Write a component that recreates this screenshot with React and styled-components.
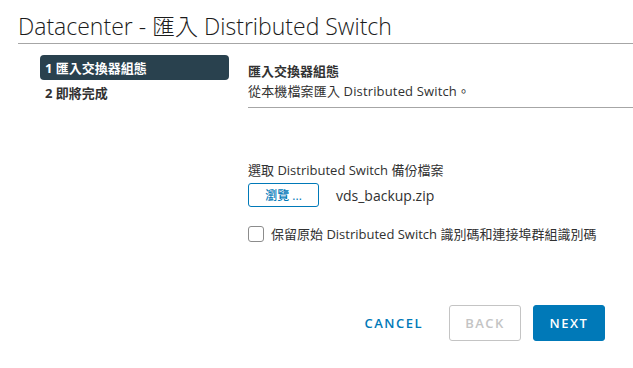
import React from "react";
import styled, { createGlobalStyle } from "styled-components";

const Global = createGlobalStyle`
  html, body { margin: 0; padding: 0; background: #fff; }
  body { font-family: "Open Sans", "Noto Sans CJK TC", sans-serif; color: #313131; }
  * { box-sizing: border-box; }
`;

const Page = styled.div`
  width: 633px;
  height: 368px;
  display: flex;
  flex-direction: column;
  padding-left: 18px;
`;

const Title = styled.h1`
  margin: 0;
  height: 44px;
  padding-top: 11px;
  font-size: 23px;
  font-weight: 300;
  line-height: 30px;
  color: #1b1b1b;
  border-bottom: 1px solid #a6a6a6;
  font-family: "Open Sans", "Noto Sans CJK TC", sans-serif;
`;

const Body = styled.div`
  display: flex;
  padding-top: 11px;
  flex: 1;
`;

const Nav = styled.nav`
  width: 189px;
  margin-left: 22px;
  display: flex;
  flex-direction: column;
`;

const Step = styled.div`
  height: 25px;
  padding-left: 5px;
  display: flex;
  align-items: center;
  font-size: 13px;
  font-weight: 700;
  border-radius: 4px;
  background: ${(p) => (p.$active ? "#29414e" : "transparent")};
  color: ${(p) => (p.$active ? "#fff" : "#313131")};
`;

const Content = styled.div`
  flex: 1;
  margin-left: 19px;
  display: flex;
  flex-direction: column;
`;

const Header = styled.div`
  padding-top: 6px;
  height: 53px;
  border-bottom: 1px solid #a6a6a6;
`;

const HeadTitle = styled.div`
  font-size: 13px;
  font-weight: 700;
  line-height: 20px;
  color: #313131;
`;

const HeadDesc = styled.div`
  font-size: 13px;
  line-height: 20px;
  letter-spacing: 0.15px;
  color: #313131;
`;

const Form = styled.div`
  padding-top: 53px;
  display: flex;
  flex-direction: column;
`;

const Label = styled.div`
  font-size: 13px;
  line-height: 18px;
  color: #313131;
`;

const FileRow = styled.div`
  display: flex;
  align-items: center;
  margin-top: 4px;
  gap: 17px;
`;

const BrowseButton = styled.button`
  width: 71px;
  height: 24px;
  border: 1px solid #0079b8;
  border-radius: 3px;
  background: #fff;
  color: #0079b8;
  font-size: 12px;
  font-weight: 500;
  font-family: inherit;
  padding: 0;
`;

const FileName = styled.span`
  font-size: 14px;
  color: #313131;
`;

const CheckRow = styled.label`
  display: flex;
  align-items: center;
  gap: 7px;
  margin-top: 17px;
  font-size: 13px;
  color: #313131;
`;

const Box = styled.span`
  width: 16px;
  height: 16px;
  border: 1px solid #8c8c8c;
  border-radius: 3px;
  background: #fff;
`;

const Footer = styled.div`
  display: flex;
  justify-content: flex-end;
  align-items: center;
  gap: 12px;
  padding-right: 28px;
  padding-bottom: 27px;
`;

const FooterButton = styled.button`
  height: 36px;
  min-width: 72px;
  padding: 0 ${(p) => (p.$flat ? "13px" : "12px")};
  font-family: inherit;
  font-size: 13px;
  font-weight: 600;
  letter-spacing: 1.5px;
  border-radius: 3px;
  border: 1px solid
    ${(p) => (p.$primary ? "#0079b8" : p.$disabled ? "#c4c4c4" : "transparent")};
  background: ${(p) => (p.$primary ? "#0079b8" : "transparent")};
  color: ${(p) => (p.$primary ? "#fff" : p.$disabled ? "#c4c4c4" : "#0079b8")};
`;

export default function App() {
  return (
    <>
      <Global />
      <Page>
        <Title>Datacenter - 匯入 Distributed Switch</Title>
        <Body>
          <Nav>
            <Step $active>1 匯入交換器組態</Step>
            <Step>2 即將完成</Step>
          </Nav>
          <Content>
            <Header>
              <HeadTitle>匯入交換器組態</HeadTitle>
              <HeadDesc>從本機檔案匯入 Distributed Switch。</HeadDesc>
            </Header>
            <Form>
              <Label>選取 Distributed Switch 備份檔案</Label>
              <FileRow>
                <BrowseButton>瀏覽 ...</BrowseButton>
                <FileName>vds_backup.zip</FileName>
              </FileRow>
              <CheckRow>
                <Box />
                保留原始 Distributed Switch 識別碼和連接埠群組識別碼
              </CheckRow>
            </Form>
          </Content>
        </Body>
        <Footer>
          <FooterButton $flat>CANCEL</FooterButton>
          <FooterButton $disabled>BACK</FooterButton>
          <FooterButton $primary>NEXT</FooterButton>
        </Footer>
      </Page>
    </>
  );
}
